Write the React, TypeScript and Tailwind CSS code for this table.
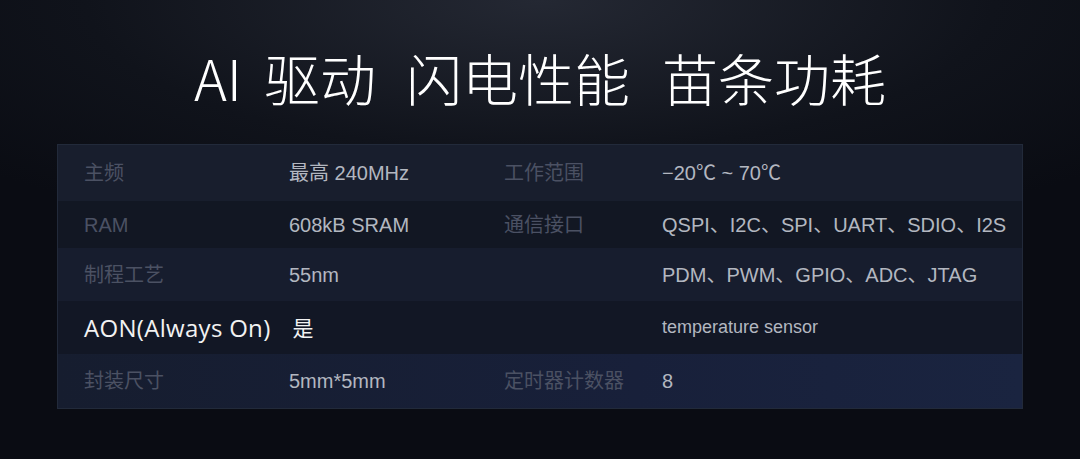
const rows = [
    { label: "主频", value: "最高 240MHz", label2: "工作范围", value2: "−20℃ ~ 70℃", bg: "bg-[#181e2d]", h: "h-[56px]" },
    { label: "RAM", value: "608kB SRAM", label2: "通信接口", value2: "QSPI、I2C、SPI、UART、SDIO、I2S", bg: "bg-[#121723]", h: "h-[47px]" },
    { label: "制程工艺", value: "55nm", label2: "", value2: "PDM、PWM、GPIO、ADC、JTAG", bg: "bg-[#171d2e]", h: "h-[53px]" },
];

const App = () => {
    return (
        <div className="w-[1080px] h-[459px] overflow-hidden bg-[#0b0d14] bg-[radial-gradient(ellipse_70%_55%_at_50%_0%,#242833_0%,#10131b_60%,#0a0c13_100%)] font-['Liberation_Sans','Noto_Sans_CJK_SC',sans-serif]">
            <h1 className="h-[144px] pt-[10px] flex items-center justify-center text-white text-[56px] font-light leading-none font-['Noto_Sans_CJK_SC',sans-serif]">
                <span className="mr-[22px]">AI</span>
                <span className="mr-[30px]">驱动</span>
                <span className="mr-[32px]">闪电性能</span>
                <span>苗条功耗</span>
            </h1>
            <div className="mx-[57px] w-[966px] border border-[#222a3a] bg-[#171d2c] text-[20px]">
                {rows.map((r) => (
                    <div key={r.label} className={`grid grid-cols-[205px_215px_158px_1fr] items-center pl-[26px] ${r.bg} ${r.h}`}>
                        <span className="text-[#4b5163]">{r.label}</span>
                        <span className="text-[#b3b7c0]">{r.value}</span>
                        <span className="text-[#4b5163]">{r.label2}</span>
                        <span className="text-[#b3b7c0] whitespace-nowrap">{r.value2}</span>
                    </div>
                ))}
                <div className="grid grid-cols-[420px_158px_1fr] items-center pl-[26px] h-[53px] bg-[#121725]">
                    <div className="flex items-center">
                        <span className="text-[#f2f2f2] text-[24px] font-['Open_Sans',sans-serif] tracking-[0.3px]">AON(Always On)</span>
                        <span className="ml-[22px] text-[#f2f2f2] text-[21px] font-['Noto_Sans_CJK_SC',sans-serif]">是</span>
                    </div>
                    <span />
                    <span className="text-[#b3b7c0] text-[18px]">temperature sensor</span>
                </div>
                <div className="grid grid-cols-[205px_215px_158px_1fr] items-center pl-[26px] h-[54px] bg-[linear-gradient(90deg,#161d2f_0%,#18203a_60%,#1a2440_100%)]">
                    <span className="text-[#4b5163]">封装尺寸</span>
                    <span className="text-[#b3b7c0]">5mm*5mm</span>
                    <span className="text-[#4b5163]">定时器计数器</span>
                    <span className="text-[#b3b7c0]">8</span>
                </div>
            </div>
        </div>
    );
};

export default App;
